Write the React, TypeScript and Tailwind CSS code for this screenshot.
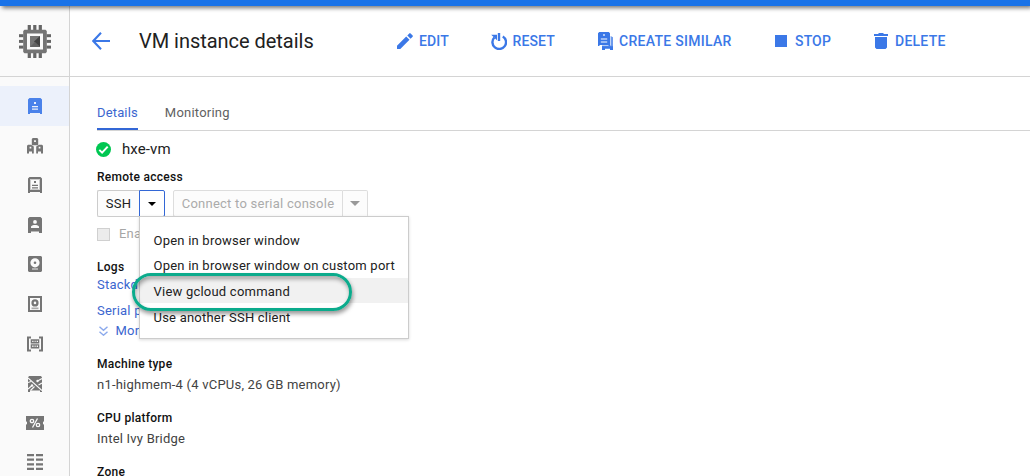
import type { ReactNode } from 'react';

function Svg({ w, h, className = '', children }: { w: number; h: number; className?: string; children: ReactNode }) {
  return (
    <svg width={w} height={h} viewBox={`0 0 ${w} ${h}`} fill="currentColor" className={`block shrink-0 ${className}`}>
      {children}
    </svg>
  );
}

function ChipLogo() {
  return (
    <Svg w={32} h={33} className="text-[#757575]">
      <g fill="#666666">
        {[8.7, 14.2, 19.7].map((x) => (
          <g key={x}>
            <rect x={x} y="0" width="3.2" height="5" />
            <rect x={x} y="28" width="3.2" height="5" />
          </g>
        ))}
        {[9.2, 14.9, 20.6].map((y) => (
          <g key={y}>
            <rect x="0" y={y} width="4.5" height="3" />
            <rect x="27.5" y={y} width="4.5" height="3" />
          </g>
        ))}
      </g>
      <path fillRule="evenodd" d="M5.500 4.700h21l1.300 1.300v21l-1.300 1.300h-21L4.200 27V6zM8 8.500v16h16v-16z" />
      <path d="M11 11h10v11H11z" />
      <path fill="#424242" d="M21 11v11l-6-5.500z" />
      <path fill="#616161" d="M11 22l5-5 5 5z" />
    </Svg>
  );
}

const navIcons: ReactNode[] = [
  <Svg key="vm" w={14} h={16}>
    <path fillRule="evenodd" d="M1.500 0h11L14 1.500V16h-2v-1H2v1H0V1.500zM6 4v2h2V4zM4 8v1.200h6V8zM4 10.500v1.200h6v-1.200z" />
  </Svg>,
  <Svg key="groups" w={16} h={16} className="relative top-[0.6px]">
    <path fillRule="evenodd" d="M4.800 1l1-1h4.400l1 1v6.200H4.800zM7.100 2.200V4h1.800V2.200z" />
    <path fillRule="evenodd" d="M0 7.800L1 6.800h3l2.800 1.700v7H5V13.500H2v2H0zM2.600 8.800v1.700h1.700V8.800z" />
    <path fillRule="evenodd" d="M16 7.800l-1-1h-3L9.200 8.500v7H11V13.500h3v2h2zM13.400 8.800v1.700h-1.700V8.800z" />
  </Svg>,
  <Svg key="templates" w={14} h={16}>
    <path fillRule="evenodd" d="M1.500 0h11L14 1.500V16h-2v-1H2v1H0V1.500zM2 2v11h10V2zM6 4h2v2H6zM4 7.700h6v1.300H4zM4 10.200h6v1.300H4z" />
    <path opacity=".35" d="M2 2h10v1H2zM2 12h10v1H2zM2 3h1v9H2zM11 3h1v9h-1z" />
  </Svg>,
  <Svg key="tenant" w={14} h={16}>
    <path fillRule="evenodd" d="M1.500 0h11L14 1.500V16h-3v-1.500H3V16H0V1.500zM7 3a1.900 1.900 0 100 3.800A1.900 1.900 0 007 3zM3 11h8v-1.400C10 8.300 8.500 8 7 8s-3 .3-4 1.600z" />
  </Svg>,
  <Svg key="disk" w={14} h={16}>
    <path fillRule="evenodd" d="M1 0h12l1 1v14l-1 1H1l-1-1V1zM7 2.200a4.600 4.600 0 100 9.200 4.600 4.600 0 000-9.200zM4 12.200v1.600h6v-1.600z" />
    <circle cx="7" cy="6.800" r="1.300" />
    <path opacity=".5" d="M4 12.200h6v1.600H4z" />
  </Svg>,
  <Svg key="snapshot" w={14} h={16}>
    <path fillRule="evenodd" d="M0 0h14v16H0zM2 2v12h10V2zM7 3.300a3.600 3.600 0 110 7.200 3.600 3.600 0 010-7.200zM7 5.600a1.300 1.300 0 100 2.600 1.300 1.300 0 000-2.600z" />
    <path opacity=".6" d="M3.500 11.500h7v1.700h-7z" />
  </Svg>,
  <Svg key="image" w={16} h={16} className="relative top-[0.5px]">
    <path d="M0 .5h4v2H2v11h2v2H0zM16 .5h-4v2h2v11h-2v2h4z" />
    <path fillRule="evenodd" d="M3.700 3.200h8.600v4.300H3.700zM5.200 4.700V6h1.300V4.700zM7.600 4.700V6h1V4.700zM9.700 4.700V6H11V4.700zM3.700 8.300h8.600v4.300H3.700zM5.200 9.600v1.300h1.300V9.600zM7.600 9.600v1.300h1V9.600zM9.700 9.600v1.300H11V9.600z" />
  </Svg>,
  <Svg key="tpu" w={14} h={16} className="relative top-[0.6px]">
    <path d="M1 0h12l1 1.500V16h-2v-1.500H2V16H0V1.500z" />
    <g stroke="#fafafa" strokeWidth="1.100" fill="none">
      <path d="M0 2l14 12.500M0 6.500l3-1M0 13l4-3.500M9.500 5L14 2.500M10.500 9L14 7M2.500 14.500l4-4" />
    </g>
    <circle cx="9.500" cy="5" r="1.200" fill="#fafafa" />
    <circle cx="4" cy="9.500" r="1.200" fill="#fafafa" />
  </Svg>,
  <Svg key="discount" w={18} h={14}>
    <path d="M0 0h18v5.300l-1 .7v2l1 .7V14H0V8.700L1 8V6l-1-.7z" />
    <g fill="none" stroke="#fafafa" strokeWidth="1.300">
      <circle cx="6" cy="5" r="1.700" />
      <circle cx="12" cy="9" r="1.700" />
      <path d="M11.500 2.500l-5 9" />
    </g>
  </Svg>,
  <Svg key="metadata" w={16} h={16}>
    {[0, 4.600, 9.200, 13.800].map((y) => (
      <path key={y} d={`M0 ${y}h7v2.200H0zM9 ${y}h7v2.200H9z`} />
    ))}
  </Svg>,
];

function Caret({ wide = false }: { wide?: boolean }) {
  return wide ? (
    <Svg w={10} h={5}>
      <path d="M0 0h10L5 5z" />
    </Svg>
  ) : (
    <Svg w={8} h={4}>
      <path d="M0 0h8L4 4z" />
    </Svg>
  );
}

function Action({ icon, label, className }: { icon: ReactNode; label: string; className: string }) {
  return (
    <button className={`flex shrink-0 items-center text-sm leading-4 font-medium whitespace-nowrap text-[#3b78e7] ${className}`}>
      {icon}
      <span>{label}</span>
    </button>
  );
}

function Sidebar() {
  return (
    <nav className="flex w-[70px] shrink-0 flex-col border-r border-[#d4d4d4] bg-[#fafafa]">
      <div className="flex h-[71px] shrink-0 items-center justify-center border-b border-[#d4d4d4]">
        <ChipLogo />
      </div>
      <div className="h-[9px] shrink-0" />
      {navIcons.map((icon, i) => (
        <a
          key={i}
          className={
            i === 0
              ? 'flex h-[39.6px] shrink-0 items-center justify-center bg-[#ecf1fb] text-[#4a82ea]'
              : 'flex h-[39.6px] shrink-0 items-center justify-center text-[#757575]'
          }
        >
          {icon}
        </a>
      ))}
    </nav>
  );
}

function Toolbar() {
  return (
    <header className="flex h-[71px] shrink-0 items-center border-b border-[#d4d4d4] pl-[22px]">
      <Svg w={18} h={18} className="text-[#3b78e7]">
        <path d="M9 .8L1.300 9 9 17.200M1.300 9H18" fill="none" stroke="currentColor" strokeWidth="2.100" />
      </Svg>
      <h1 className="ml-[29px] w-[258px] shrink-0 text-xl leading-6 tracking-[-0.03px] whitespace-nowrap text-[#212121]">VM instance details</h1>
      <Action
        className="w-[94px] gap-[6px] tracking-[0.15px]"
        label="EDIT"
        icon={
          <Svg w={16} h={16}>
            <path d="M0 12.700V16h3.300l9.200-9.200-3.300-3.300zM10.300 2.400l3.300 3.300 2-2a.9.9 0 000-1.300L13.600.4a.9.9 0 00-1.300 0z" />
          </Svg>
        }
      />
      <Action
        className="w-[107px] gap-[5.5px] tracking-[0.1px]"
        label="RESET"
        icon={
          <Svg w={16} h={17}>
            <path d="M3.300 4.500A6.800 6.800 0 1011.800 3.400" fill="none" stroke="currentColor" strokeWidth="2.400" />
            <path d="M6.800 0h2.400v8H6.800zM.2 1.700h5.800v5.600z" />
          </Svg>
        }
      />
      <Action
        className="w-[177px] gap-[5px] tracking-[0.28px]"
        label="CREATE SIMILAR"
        icon={
          <Svg w={16} h={18}>
            <path fillRule="evenodd" d="M1.200 0h9.600L12 1.200V14h-1.500v-1H1.500v1H0V1.200zM5.200 2.300v1.400h1.600V2.300zM2.800 6.500v1h6.400v-1zM2.800 9.500v1h6.400v-1z" />
            <path opacity=".75" d="M12.600 4l2.400 1.200V15H4v-1.500h8.600z" />
            <path d="M4 14.300h11V18h-3v-1.300H7V18H4z" />
          </Svg>
        }
      />
      <Action
        className="w-[99px] gap-[8px] tracking-[0.15px]"
        label="STOP"
        icon={
          <Svg w={12} h={12}>
            <path d="M0 0h12v12H0z" />
          </Svg>
        }
      />
      <Action
        className="gap-[7px] tracking-[0.25px]"
        label="DELETE"
        icon={
          <Svg w={14} h={16}>
            <path d="M1 4h12v10.500L11.500 16h-9L1 14.500zM0 1h4l1-1h4l1 1h4v2H0z" />
          </Svg>
        }
      />
    </header>
  );
}

const menuItems = ['Open in browser window', 'Open in browser window on custom port', 'View gcloud command', 'Use another SSH client'];

function SshMenu() {
  return (
    <div className="absolute top-[26px] left-[42px] z-10 flex h-[123px] w-[270px] flex-col border border-[#cccccc] bg-white pt-[10px] shadow-[0_1px_3px_rgba(0,0,0,0.15)]">
      {menuItems.map((item, i) => (
        <div
          key={item}
          className={
            i === 2
              ? 'mb-px flex h-[25px] shrink-0 items-center bg-[#f1f1f1] pt-[2px] pl-[13.5px] whitespace-nowrap'
              : 'flex h-[25.5px] shrink-0 items-center pt-[1.5px] pl-[13.5px] whitespace-nowrap'
          }
        >
          {item}
        </div>
      ))}
      <div className="absolute top-[56px] left-[-8px] h-[38px] w-[220px] rounded-full border-3 border-[#0bab8c] shadow-[1px_3px_4px_rgba(0,0,0,0.4),inset_1px_3px_4px_rgba(0,0,0,0.35)]" />
    </div>
  );
}

function Heading({ children, className }: { children: ReactNode; className: string }) {
  return <h2 className={`text-xs leading-4 font-medium tracking-[0.27px] text-[#111111] ${className}`}>{children}</h2>;
}

function Details() {
  return (
    <main className="flex min-h-0 flex-1 flex-col items-start pl-[27px] text-[13px] leading-4 tracking-[0.22px] text-[#212121]">
      <div className="flex h-[54px] w-full shrink-0 items-end gap-[27px] border-b border-[#d4d4d4]">
        <a className="h-[25px] border-b-2 border-[#3367d6] tracking-[0.15px] text-[#3b66cf]">Details</a>
        <a className="h-[25px] text-[#616161]">Monitoring</a>
      </div>
      <div className="mt-[8px] flex h-5 shrink-0 items-center text-[15px] tracking-[0.1px]">
        <Svg w={15} h={15} className="mr-[11px] -ml-px text-[#00c752]">
          <circle cx="7.500" cy="7.500" r="7.500" />
          <path d="M3.300 7.900l2.800 2.700 5.600-6" fill="none" stroke="#fff" strokeWidth="2" />
        </Svg>
        hxe-vm
      </div>
      <Heading className="mt-[10px]">Remote access</Heading>
      <div className="relative mt-[5px] flex h-[27px] shrink-0">
        <button className="flex w-[42px] items-center justify-center rounded-l-xs border border-r-0 border-[#cccccc] bg-[#fcfcfc]">SSH</button>
        <button className="flex w-[26px] items-center justify-center rounded-r-xs border border-[#3367d6] bg-white text-black">
          <Caret />
        </button>
        <button className="ml-2 flex w-[170px] items-center justify-center rounded-l-xs border border-[#dddddd] bg-[#fcfcfc] tracking-[0.25px] whitespace-nowrap text-[#ababab]">
          Connect to serial console
        </button>
        <button className="flex w-[25px] items-center justify-center rounded-r-xs border border-l-0 border-[#dddddd] bg-[#fcfcfc] text-[#999999]">
          <Caret wide />
        </button>
        <SshMenu />
      </div>
      <label className="mt-[9px] flex items-center gap-[9px] text-[#a6a6a6]">
        <span className="h-[13px] w-[13px] border border-[#d0d0d0] bg-[#ececec]" />
        Ena
      </label>
      <Heading className="mt-[17px]">Logs</Heading>
      <a className="mt-[2px] text-[#3b66cf]">Stackd</a>
      <a className="mt-[10px] text-[#3b66cf]">Serial p</a>
      <a className="mt-1 flex items-center text-[#3b66cf]">
        <Svg w={9} h={10} className="mr-[7.5px] ml-[2px] text-[#8ba9ec]">
          <path d="M.5 .7l4 3.500 4-3.500M.5 5.700l4 3.500 4-3.500" fill="none" stroke="currentColor" strokeWidth="1.400" />
        </Svg>
        Mor
      </a>
      <Heading className="mt-[17px]">Machine type</Heading>
      <p className="mt-[5px] text-[#424242]">n1-highmem-4 (4 vCPUs, 26 GB memory)</p>
      <Heading className="mt-[17px]">CPU platform</Heading>
      <p className="mt-[5px] text-[#424242]">Intel Ivy Bridge</p>
      <Heading className="mt-[17px]">Zone</Heading>
    </main>
  );
}

export default function App() {
  return (
    <div className="flex h-[476px] w-[1030px] flex-col overflow-hidden bg-white font-[Roboto,sans-serif]">
      <div className="relative z-20 h-[6px] shrink-0 bg-[#1a73e8] shadow-[2px_2px_4px_rgba(0,0,0,0.55)]" />
      <div className="flex min-h-0 flex-1">
        <Sidebar />
        <div className="flex min-w-0 flex-1 flex-col">
          <Toolbar />
          <Details />
        </div>
      </div>
    </div>
  );
}
